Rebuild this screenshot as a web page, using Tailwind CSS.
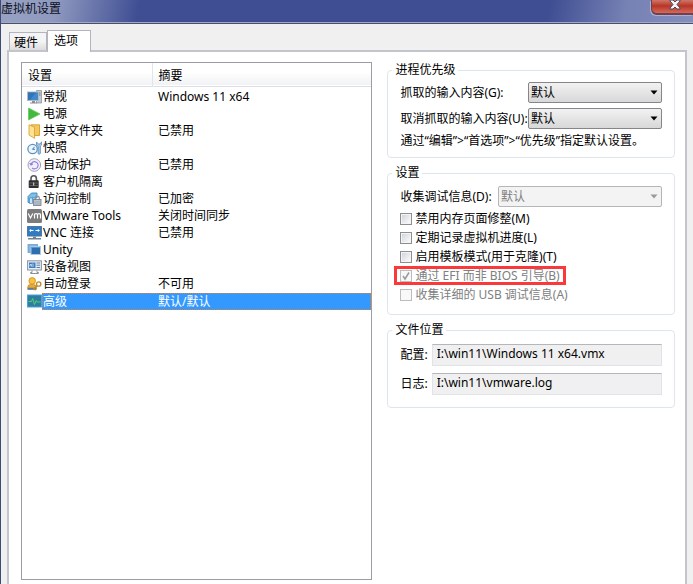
<!DOCTYPE html>
<html lang="zh-CN">
<head>
    <meta charset="UTF-8">
    <meta name="viewport" content="width=device-width, initial-scale=1.0">
    <title>虚拟机设置</title>
    <script src="https://cdn.jsdelivr.net/npm/@tailwindcss/browser@4"></script>
</head>
<body class="flex h-screen flex-col overflow-hidden border-l border-[#3f4a78] bg-[#f0f0f0] font-['Noto_Sans','Noto_Sans_CJK_SC',sans-serif] text-[12px] leading-4 text-black">

    <!-- title bar -->
    <header class="flex h-6 shrink-0 items-start justify-between border-b border-[#4a4f70] bg-[linear-gradient(100deg,#98a2c4_0%,#8f99bf_8%,#3f4e93_20%,#3f4e93_79%,#7681b4_90%,#858fbd_100%)] shadow-[inset_0_-1px_0_#a3a9c4]">
        <h1 class="pt-px text-[#0c1020]">虚拟机设置</h1>
        <button type="button" aria-label="关闭" class="flex h-[15px] w-[42px] items-center justify-center rounded-bl-md border-b-2 border-l border-[#713f50] bg-linear-to-b from-[#cf7468] via-[#b73526] via-45% to-[#d4695a] pl-1 pb-1 shadow-[-1px_1px_0_#a9b0d2]">
            <svg class="h-[11px] w-3" viewBox="0 0 12 11">
                <path d="M1 1h3l2 2 2-2h3v1L8 5.500l3 3.500v1H8L6 8l-2 2H1V9l3-3.500L1 2z" fill="#f4f4f6" stroke="#4d4658" stroke-width="1"/>
            </svg>
        </button>
    </header>

    <div class="flex min-h-0 flex-1 flex-col px-1.5 pt-1.5">
        <!-- tabs -->
        <div class="flex items-end pl-0.5" role="tablist">
            <button type="button" role="tab" class="h-[18px] w-[38px] border border-b-0 border-[#b4b4be] bg-linear-to-b from-[#f4f4f4] from-50% to-[#dcdcdc] pt-0.5 pr-1 text-center">硬件</button>
            <button type="button" role="tab" aria-selected="true" class="relative -mb-0.5 h-[22px] w-11 border border-b-0 border-[#b4b4be] bg-white pr-1.5 pb-0.5 text-center">选项</button>
        </div>

        <main class="grid flex-1 grid-cols-[11fr_9fr] gap-[15px] border-2 border-b-0 border-[#c4c4cc] bg-white pt-2.5 pr-2.5 pb-1 pl-3">
            <!-- settings list -->
            <div class="border border-[#9a9ca6]">
                <table class="w-full table-fixed border-collapse text-left">
                    <thead>
                        <tr class="h-[23px] border-b border-[#dcdee4] bg-linear-to-b from-white from-40% to-[#f1f2f5]">
                            <th class="w-[130px] border-r border-[#e2e4ea] pt-1 pl-1.5 font-normal">设置</th>
                            <th class="pt-1 pl-1.5 font-normal">摘要</th>
                        </tr>
                    </thead>
                    <tbody class="before:block before:h-0.5">
                        <tr class="h-[17px]">
                            <td class="p-0 pl-[5px]"><div class="flex items-center gap-px">
                                <svg class="size-[15px] shrink-0" viewBox="0 0 15 15"><path d="M9.500.500h5v12.500h-5z" fill="#c3cad2" stroke="#7f8993" stroke-width=".7"/><path d="M11 3h2.500M11 5h2.500" stroke="#5e6973" stroke-width=".8"/><rect x=".5" y="2" width="11" height="8.500" fill="#4389c9" stroke="#a9bccd"/><path d="M1 2.500h8L3 10H1z" fill="#3474b5"/><path d="M5 11h3v1.500h2v1H3v-1h2z" fill="#858f99"/></svg>
                                <span class="flex-1">常规</span></div></td>
                            <td class="p-0 pl-1.5">Windows 11 x64</td>
                        </tr>
                        <tr class="h-[17px]">
                            <td class="p-0 pl-[5px]"><div class="flex items-center gap-px">
                                <svg class="size-[15px] shrink-0" viewBox="0 0 15 15"><path d="M1.500 1 13 7 1.500 13z" fill="#43b73e" stroke="#65c95c" stroke-width=".8"/></svg>
                                <span class="flex-1">电源</span></div></td>
                            <td class="p-0"></td>
                        </tr>
                        <tr class="h-[17px]">
                            <td class="p-0 pl-[5px]"><div class="flex items-center gap-px">
                                <svg class="size-[15px] shrink-0" viewBox="0 0 15 15"><path d="M4 .800h8.500V11.500H7z" fill="#f4c85c" stroke="#cf9428" stroke-width=".8"/><path d="M2 .8l5.500 2.500v11L2 11z" fill="#ffe395" stroke="#d99b2b" stroke-width=".8"/></svg>
                                <span class="flex-1">共享文件夹</span></div></td>
                            <td class="p-0 pl-1.5">已禁用</td>
                        </tr>
                        <tr class="h-[17px]">
                            <td class="p-0 pl-[5px]"><div class="flex items-center gap-px">
                                <svg class="size-[15px] shrink-0" viewBox="0 0 15 15"><path d="M9.500 1v3l1.500 1.200V12a1.200 1.200 0 0 0 2.400 0V5.200l1.200-1.200V.800L13 3h-1.500z" fill="#a4c8e6" stroke="#4f83ae" stroke-width=".7"/><circle cx="5.600" cy="8" r="4.700" fill="#eef6fc" stroke="#5c95c5" stroke-width="1.300"/><path d="M7.500 5.800 5.500 8.300H8" fill="none" stroke="#3f79aa"/></svg>
                                <span class="flex-1">快照</span></div></td>
                            <td class="p-0"></td>
                        </tr>
                        <tr class="h-[17px]">
                            <td class="p-0 pl-[5px]"><div class="flex items-center gap-px">
                                <svg class="size-[15px] shrink-0" viewBox="0 0 15 15"><circle cx="7.300" cy="7" r="6.300" fill="#f1f0fa" stroke="#a4a4b0"/><path d="M4 6.500a3.600 3.600 0 1 1 1 3.300M2.700 5 4 7l2-1.200" fill="none" stroke="#8a7ce2" stroke-width="1.100"/></svg>
                                <span class="flex-1">自动保护</span></div></td>
                            <td class="p-0 pl-1.5">已禁用</td>
                        </tr>
                        <tr class="h-[17px]">
                            <td class="p-0 pl-[5px]"><div class="flex items-center gap-px">
                                <svg class="size-[15px] shrink-0" viewBox="0 0 15 15"><path d="M4 6V3.500a2.700 2.700 0 0 1 5.400 0V6" fill="none" stroke="#555" stroke-width="1.600"/><rect x="1.700" y="5.300" width="10" height="7.700" rx=".8" fill="#303030"/><path d="M2.500 8h8.400M2.500 10.500h8.400" stroke="#6d6d6d" stroke-width=".8"/><path d="M6.700 7.500v3" stroke="#ddd"/></svg>
                                <span class="flex-1">客户机隔离</span></div></td>
                            <td class="p-0"></td>
                        </tr>
                        <tr class="h-[17px]">
                            <td class="p-0 pl-[5px]"><div class="flex items-center gap-px">
                                <svg class="size-[15px] shrink-0" viewBox="0 0 15 15"><path d="M1 4.500 4.500 1H10v5H5v4.500H1z" fill="#7cbfe8" stroke="#2f7db7" stroke-width=".8"/><path d="M2.500 6h3v5.500h-3z" fill="#c9e6f8" stroke="#3b8ac4" stroke-width=".7"/><path d="M8.300 8V6.200a2 2 0 0 1 4 0V8" fill="none" stroke="#8a929c" stroke-width="1.200"/><rect x="6.500" y="7.500" width="7.500" height="6" fill="#bcc4cd" stroke="#707a86" stroke-width=".8"/><path d="M7 10h6.500M7 12h6.500" stroke="#8d97a2" stroke-width=".6"/></svg>
                                <span class="flex-1">访问控制</span></div></td>
                            <td class="p-0 pl-1.5">已加密</td>
                        </tr>
                        <tr class="h-[17px]">
                            <td class="p-0 pl-[5px]"><div class="flex items-center gap-px">
                                <svg class="size-[15px] shrink-0" viewBox="0 0 15 15"><rect width="15" height="14" rx="1.500" fill="#7c7c7c"/><path d="M1.200 4.500 3.500 9 5.800 4.500M7.500 9.500V5.800q0-1.200 1.500-1.200t1.500 1.200v3.700M10.500 5.800q0-1.200 1.500-1.200t1.500 1.200v3.700" fill="none" stroke="#fff" stroke-width="1.200"/></svg>
                                <span class="flex-1">VMware Tools</span></div></td>
                            <td class="p-0 pl-1.5">关闭时间同步</td>
                        </tr>
                        <tr class="h-[17px]">
                            <td class="p-0 pl-[5px]"><div class="flex items-center gap-px">
                                <svg class="size-[15px] shrink-0" viewBox="0 0 15 15"><rect x=".6" y=".6" width="13.800" height="9.400" fill="#2f7cc6" stroke="#4b6f92"/><path d="M3 4.500h3.500M8.500 4.500H12" stroke="#fff"/><path d="M4 3.200 2.700 4.500 4 5.800M11 3.200 12.300 4.500 11 5.800" fill="none" stroke="#fff" stroke-width=".9"/><path d="M6 10.500h3V12h5v1.500H1V12h5z" fill="#748391"/></svg>
                                <span class="flex-1">VNC 连接</span></div></td>
                            <td class="p-0 pl-1.5">已禁用</td>
                        </tr>
                        <tr class="h-[17px]">
                            <td class="p-0 pl-[5px]"><div class="flex items-center gap-px">
                                <svg class="size-[15px] shrink-0" viewBox="0 0 15 15"><rect x="1" y="1.500" width="9.500" height="8" fill="#83b4df" stroke="#6b9fcf" stroke-width=".8"/><rect x="4" y="3.500" width="9.500" height="8" fill="#2e6eb0" stroke="#a8cae8"/><path d="M4.500 4.500h8.500" stroke="#5d95cc"/></svg>
                                <span class="flex-1">Unity</span></div></td>
                            <td class="p-0"></td>
                        </tr>
                        <tr class="h-[17px]">
                            <td class="p-0 pl-[5px]"><div class="flex items-center gap-px">
                                <svg class="size-[15px] shrink-0" viewBox="0 0 15 15"><rect x=".6" y=".8" width="13.800" height="9.200" fill="#e5edf6" stroke="#8b929a"/><rect x="2" y="2.500" width="6.500" height="5.500" fill="#3d7dc2"/><path d="M3 6.500v-2h1.500v2M6 3.500V7" stroke="#dbe9f7" fill="none" stroke-width=".8"/><path d="M9.500 3H13M9.500 5.200H13M9.500 7.500H13" stroke="#5d7fa8"/><path d="M5 10.500v2H3.500v1h8v-1H10v-2" fill="none" stroke="#8b929a"/></svg>
                                <span class="flex-1">设备视图</span></div></td>
                            <td class="p-0"></td>
                        </tr>
                        <tr class="h-[17px]">
                            <td class="p-0 pl-[5px]"><div class="flex items-center gap-px">
                                <svg class="size-[15px] shrink-0" viewBox="0 0 15 15"><path d="M.7 12.500V10.500q0-3 3-3h2.600q3 0 3 3v2z" fill="#f0aa2b" stroke="#b77d17" stroke-width=".7"/><path d="M1 12.500h8v-1.800H1z" fill="#3f7fcb"/><circle cx="5.200" cy="3.900" r="3.300" fill="#f9c044" stroke="#d28e17" stroke-width=".8"/><circle cx="11.700" cy="7" r="2.200" fill="#fff" stroke="#b98d36" stroke-width="1.300"/><path d="M10.300 8.800 6 12.700M7 11.800l1.500 1.500M8.700 10.300l1.200 1.200" stroke="#b98d36" stroke-width="1.300"/></svg>
                                <span class="flex-1">自动登录</span></div></td>
                            <td class="p-0 pl-1.5">不可用</td>
                        </tr>
                        <tr class="h-[17px] text-white" aria-selected="true">
                            <td class="p-0 pl-[5px]"><div class="flex items-center">
                                <svg class="size-[15px] shrink-0" viewBox="0 0 15 15"><rect x=".5" y="1" width="14" height="12" fill="#2f7f9c" stroke="#4d9fe0"/><path d="M1.500 7.500h3l1.200-3 1.800 6 1.700-4 1 1.500h3.300" fill="none" stroke="#4fd07c"/></svg>
                                <span class="h-[17px] flex-1 border border-r-0 border-dotted border-[#e0812e] bg-[#3399ff] leading-[15px]">高级</span></div></td>
                            <td class="p-0"><div class="h-[17px] border border-l-0 border-dotted border-[#e0812e] bg-[#3399ff] pl-1.5 leading-[15px]">默认/默认</div></td>
                        </tr>
                    </tbody>
                </table>
            </div>

            <!-- options of the selected entry -->
            <form class="flex flex-col gap-[7px]">
                <fieldset class="rounded border border-[#dde6ec] px-3 pb-2">
                    <legend class="-ml-2 px-[3px]">进程优先级</legend>
                    <div class="flex flex-col gap-[5px] pt-1">
                        <div class="flex items-center justify-between">
                            <label for="grabbed" class="whitespace-nowrap">抓取的输入内容(G):</label>
                            <div class="relative w-[134px] shrink-0">
                                <select id="grabbed" class="block h-[21px] w-full appearance-none rounded-xs border border-[#85858a] bg-linear-to-b from-[#f2f2f2] to-[#d8d8d8] pl-0.5"><option>默认</option></select>
                                <svg class="pointer-events-none absolute top-2 right-1 h-[5px] w-2" viewBox="0 0 8 5"><path d="M.5.500h7L4 4.500z" fill="#000"/></svg>
                            </div>
                        </div>
                        <div class="flex items-center justify-between">
                            <label for="ungrabbed" class="whitespace-nowrap">取消抓取的输入内容(U):</label>
                            <div class="relative w-[134px] shrink-0">
                                <select id="ungrabbed" class="block h-[21px] w-full appearance-none rounded-xs border border-[#85858a] bg-linear-to-b from-[#f2f2f2] to-[#d8d8d8] pl-0.5"><option>默认</option></select>
                                <svg class="pointer-events-none absolute top-2 right-1 h-[5px] w-2" viewBox="0 0 8 5"><path d="M.5.500h7L4 4.500z" fill="#000"/></svg>
                            </div>
                        </div>
                    </div>
                    <p class="mt-1 whitespace-nowrap">通过“编辑”&gt;“首选项”&gt;“优先级”指定默认设置。</p>
                </fieldset>

                <fieldset class="rounded border border-[#dde6ec] px-3 pb-2.5">
                    <legend class="-ml-2 px-[3px]">设置</legend>
                    <div class="flex items-center justify-between pt-[5px] pb-0.5">
                        <label for="debug" class="whitespace-nowrap">收集调试信息(D):</label>
                        <div class="relative w-[164px] shrink-0">
                            <select id="debug" disabled class="block h-[21px] w-full appearance-none rounded-xs border border-[#b4b6ba] bg-[#f3f3f3] pl-0.5 text-[#808080] opacity-100"><option>默认</option></select>
                            <svg class="pointer-events-none absolute top-2 right-1 h-[5px] w-2" viewBox="0 0 8 5"><path d="M.5.500h7L4 4.500z" fill="#9a9a9a"/></svg>
                        </div>
                    </div>
                    <label class="flex h-[19px] items-center gap-[3px]"><input type="checkbox" class="size-3 appearance-none border border-[#8e8f8f] bg-linear-to-br from-[#cdd1d8] to-white shadow-[inset_0_0_0_1px_#f4f4f4]">禁用内存页面修整(M)</label>
                    <label class="flex h-[19px] items-center gap-[3px]"><input type="checkbox" class="size-3 appearance-none border border-[#8e8f8f] bg-linear-to-br from-[#cdd1d8] to-white shadow-[inset_0_0_0_1px_#f4f4f4]">定期记录虚拟机进度(L)</label>
                    <label class="flex h-[19px] items-center gap-[3px]"><input type="checkbox" class="size-3 appearance-none border border-[#8e8f8f] bg-linear-to-br from-[#cdd1d8] to-white shadow-[inset_0_0_0_1px_#f4f4f4]">启用模板模式(用于克隆)(T)</label>
                    <label class="relative flex h-[19px] items-center gap-[3px] text-[#808080]">
                        <span class="relative flex">
                            <input type="checkbox" checked disabled class="size-3 appearance-none border border-[#bcbcbc] bg-[#f8f8f8]">
                            <svg class="pointer-events-none absolute inset-0 size-3" viewBox="0 0 12 12"><path d="M3 6l2 3 4-6.500" fill="none" stroke="#9a9a9a" stroke-width="1.500"/></svg>
                        </span>
                        通过 EFI 而非 BIOS 引导(B)
                        <span class="absolute inset-y-0 -left-1.5 w-[172px] border-3 border-[#fa3a3a]"></span>
                    </label>
                    <label class="flex h-[19px] items-center gap-[3px] text-[#808080]"><input type="checkbox" disabled class="size-3 appearance-none border border-[#bcbcbc] bg-[#f8f8f8]">收集详细的 USB 调试信息(A)</label>
                </fieldset>

                <fieldset class="rounded border border-[#dde6ec] px-3 pb-3">
                    <legend class="-ml-2 px-[3px]">文件位置</legend>
                    <div class="flex flex-col gap-[7px] pt-1.5">
                        <div class="flex items-center gap-1">
                            <label for="config" class="shrink-0">配置:</label>
                            <input id="config" type="text" readonly value="I:\win11\Windows 11 x64.vmx" class="h-[22px] min-w-0 flex-1 border border-[#e0e4ea] border-t-[#b4b6be] bg-[#f0f0f0] px-1 pb-1">
                        </div>
                        <div class="flex items-center gap-1">
                            <label for="log" class="shrink-0">日志:</label>
                            <input id="log" type="text" readonly value="I:\win11\vmware.log" class="h-[22px] min-w-0 flex-1 border border-[#e0e4ea] border-t-[#b4b6be] bg-[#f0f0f0] px-1 pb-1">
                        </div>
                    </div>
                </fieldset>
            </form>
        </main>
    </div>
</body>
</html>
